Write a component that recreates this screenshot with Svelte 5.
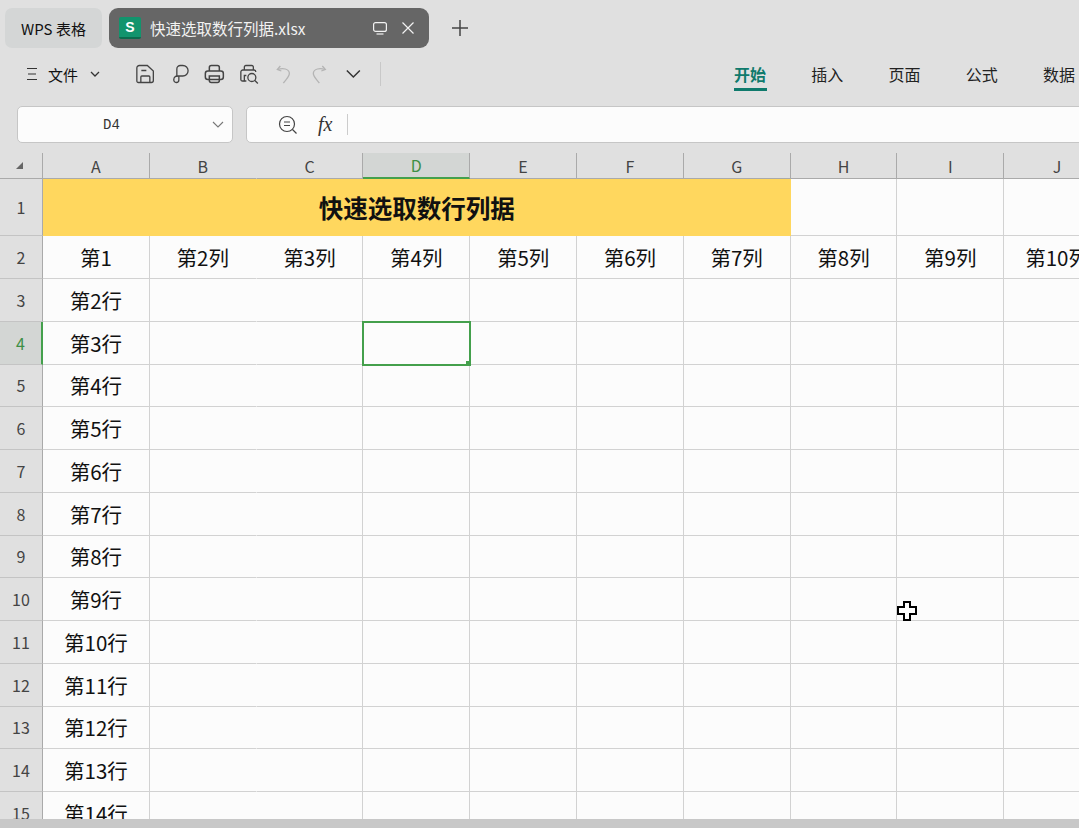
<script>
  const cols = ['A', 'B', 'C', 'D', 'E', 'F', 'G', 'H', 'I', 'J']
  const ribbon = ['开始', '插入', '页面', '公式', '数据']
  const rows = Array.from({ length: 13 }, (_, i) => ({ num: i + 3, label: `第${i + 2}行` }))
  const secondRow = cols.map((_, i) => (i === 0 ? '第1' : `第${i + 1}列`))
</script>

<div class="app">
  <!-- Tabs -->
  <div class="tabs">
    <div class="tab-home">WPS 表格</div>
    <div class="tab-doc">
      <span class="s-logo">S</span>
      <span class="doc-name">快速选取数行列据.xlsx</span>
      <svg class="doc-icon monitor" width="16" height="16" viewBox="0 0 16 16" fill="none" stroke="#f2f2f2" stroke-width="1.2">
        <rect x="1.6" y="2.6" width="12.8" height="8.8" rx="2" />
        <path d="M4.5 14h7" />
      </svg>
      <svg class="doc-icon close" width="14" height="14" viewBox="0 0 14 14" fill="none" stroke="#f2f2f2" stroke-width="1.2">
        <path d="M1.5 1.5l11 11M12.5 1.5l-11 11" />
      </svg>
    </div>
    <svg class="plus" width="18" height="18" viewBox="0 0 18 18" fill="none" stroke="#444" stroke-width="1.5">
      <path d="M9 1v16M1 9h16" />
    </svg>
  </div>

  <!-- Toolbar -->
  <div class="toolbar">
    <div class="file-menu">
      <svg width="12" height="16" viewBox="0 0 12 16" fill="none" stroke="#333" stroke-width="1.2">
        <path d="M1 2.5h10M2 8h8M1 13.5h10" />
      </svg>
      <span class="file-label">文件</span>
      <svg width="10" height="6" viewBox="0 0 10 6" fill="none" stroke="#333" stroke-width="1.3">
        <path d="M1 1l4 4 4-4" />
      </svg>
    </div>
    <div class="quick">
      <svg class="qicon" viewBox="0 0 20 20" fill="none" stroke="#444" stroke-width="1.3">
        <path d="M4 1.5h8l6 5.5v9.5a2 2 0 0 1-2 2H3a1.5 1.5 0 0 1-1.5-1.5V4A2.5 2.5 0 0 1 4 1.5z" />
        <path d="M6 6.5h5M5.5 18.500v-5.500a1 1 0 0 1 1-1h7a1 1 0 0 1 1 1v5.500" />
      </svg>
      <svg class="qicon" viewBox="0 0 20 20" fill="none" stroke="#444" stroke-width="1.3">
        <path d="M6.500 13V5a3.500 3.500 0 0 1 3.500-3.500h2.500a5 5 0 0 1 0 10.500H7a3.500 3.500 0 0 0-3.500 3.500A2.500 2.500 0 0 0 6 18.500a2.500 2.500 0 0 0 2.500-2.500V12" />
      </svg>
      <svg class="qicon" viewBox="0 0 20 20" fill="none" stroke="#444" stroke-width="1.5">
        <path d="M5 7V3.500a2 2 0 0 1 2-2h6a2 2 0 0 1 2 2V7" />
        <rect x="1" y="7" width="18" height="8.500" rx="2.500" />
        <path d="M5 12v4.500a2 2 0 0 0 2 2h6a2 2 0 0 0 2-2V12H5z" />
      </svg>
      <svg class="qicon" viewBox="0 0 20 20" fill="none" stroke="#444" stroke-width="1.300">
        <path d="M5 6V3a1.500 1.500 0 0 1 1.500-1.500h6A1.500 1.500 0 0 1 14 3v3" />
        <path d="M5 17H3a1.500 1.500 0 0 1-1.500-1.500V8A2 2 0 0 1 3.500 6h11A2 2 0 0 1 16.500 8" />
        <path d="M7 11.500H5v5.500h2" />
        <circle cx="12.500" cy="13.500" r="4" />
        <path d="M15.500 16.500l3 3" />
      </svg>
      <svg class="qicon" viewBox="0 0 20 20" fill="none" stroke="#b4b4b4" stroke-width="1.300">
        <path d="M6 2L3 5.500l4 1.500" />
        <path d="M3.500 5.500c5-2 11-.5 11.500 3.500.4 3.500-3 6-6 10" />
      </svg>
      <svg class="qicon" viewBox="0 0 20 20" fill="none" stroke="#b4b4b4" stroke-width="1.300">
        <path d="M14 2l3 3.500-4 1.500" />
        <path d="M16.500 5.500c-5-2-11-.5-11.500 3.500-.4 3.500 3 6 6 10" />
      </svg>
      <svg class="qicon" viewBox="0 0 20 20" fill="none" stroke="#333" stroke-width="1.500">
        <path d="M3.500 6.500L10 13l6.500-6.500" />
      </svg>
    </div>
    <span class="tool-sep"></span>
    <nav class="ribbon">
      {#each ribbon as item, i}
        <span class="ribbon-item" class:active={i === 0}>{item}</span>
      {/each}
    </nav>
  </div>

  <!-- Formula bar -->
  <div class="formula-row">
    <div class="name-box">
      <span class="cell-ref">D4</span>
      <svg class="name-chevron" width="12" height="7" viewBox="0 0 12 7" fill="none" stroke="#777" stroke-width="1.100">
        <path d="M1 1l5 5 5-5" />
      </svg>
    </div>
    <div class="formula-box">
      <svg class="find-icon" width="20" height="20" viewBox="0 0 20 20" fill="none" stroke="#444" stroke-width="1.200">
        <circle cx="9" cy="9" r="7.500" />
        <path d="M6 7h6M6 10.500h6M14.500 14.500l4 4" />
      </svg>
      <span class="fx">fx</span>
      <span class="fx-sep"></span>
    </div>
  </div>

  <!-- Sheet -->
  <div class="sheet">
    <div class="corner"><span class="corner-mark"></span></div>
    {#each cols as col}
      <div class="col-head" class:sel={col === 'D'} class:no-line={col === 'B'}>{col}</div>
    {/each}

    <div class="row-head">1</div>
    <div class="title-cell">快速选取数行列据</div>
    {#each cols.slice(7) as _}
      <div class="cell"></div>
    {/each}

    <div class="row-head">2</div>
    {#each secondRow as text, i}
      <div class="cell" class:no-line={i === 1}>{text}</div>
    {/each}

    {#each rows as row}
      <div class="row-head" class:sel={row.num === 4}>{row.num}</div>
      {#each cols as col, i}
        <div class="cell" class:no-line={col === 'B'} class:current={row.num === 4 && col === 'D'}>
          {i === 0 ? row.label : ''}
        </div>
      {/each}
    {/each}

    <svg class="cursor" width="22" height="22" viewBox="0 0 22 22" shape-rendering="crispEdges">
      <path d="M7 1h8v5h6v9h-6v6H7v-6H1V6h6z" fill="#000" />
      <path d="M9 3h4v5h6v5h-6v6H9v-6H3V8h6z" fill="#fff" transform="translate(0 0)" />
    </svg>
  </div>

  <div class="scroll-strip"></div>
</div>

<style>
  :global(body) {
    margin: 0;
    background: #e0e0e0;
  }

  .app {
    display: flex;
    flex-direction: column;
    width: 1079px;
    height: 828px;
    overflow: hidden;
    background: #e0e0e0;
    color: #111;
    font-family: "Noto Sans CJK SC", "Noto Sans", sans-serif;
  }

  .tabs {
    display: flex;
    align-items: stretch;
    height: 40px;
    padding: 8px 0 8px 5px;
    gap: 7px;
    flex-shrink: 0;
  }

  .tab-home {
    display: flex;
    align-items: center;
    justify-content: center;
    width: 97px;
    border-radius: 7px;
    background: #d4d6d6;
    font-size: 15px;
  }

  .tab-doc {
    display: flex;
    align-items: center;
    width: 320px;
    box-sizing: border-box;
    padding: 0 14px 0 10px;
    border-radius: 9px;
    background: #666;
    color: #f2f2f2;
    font-size: 15.500px;
  }

  .s-logo {
    display: flex;
    align-items: center;
    justify-content: center;
    width: 22px;
    height: 22px;
    border-radius: 2px;
    background: #12946d;
    border-bottom: 2px solid #0c6b4d;
    box-sizing: border-box;
    color: #fff;
    font: 700 14px "Liberation Sans", sans-serif;
  }

  .doc-name {
    margin-left: 9px;
    flex: 1;
    white-space: nowrap;
  }

  .monitor {
    margin-right: 13px;
  }

  .plus {
    align-self: center;
    margin-left: 15px;
  }

  .toolbar {
    display: flex;
    align-items: center;
    height: 36px;
    padding-right: 4px;
    flex-shrink: 0;
  }

  .file-menu {
    display: flex;
    align-items: center;
    width: 128px;
    box-sizing: border-box;
    padding-left: 26px;
  }

  .file-label {
    margin: 0 12px 0 10px;
    font-size: 15px;
  }

  .quick {
    display: flex;
    width: 243px;
  }

  .qicon {
    width: 20px;
    height: 20px;
    flex: 0 0 34.700px;
    box-sizing: border-box;
    padding: 0 7px;
  }

  .tool-sep {
    width: 1px;
    height: 24px;
    margin-left: 9px;
    background: #c8c8c8;
  }

  .ribbon {
    display: flex;
    justify-content: space-between;
    flex: 1;
    margin-left: 353px;
  }

  .ribbon-item {
    position: relative;
    font-size: 16px;
    line-height: 24px;
    color: #222;
  }

  .ribbon-item.active {
    color: #0f7a6c;
    font-weight: 700;
  }

  .ribbon-item.active::after {
    content: "";
    position: absolute;
    left: 0;
    right: -1px;
    bottom: -5px;
    height: 3px;
    background: #0f7a6c;
  }

  .formula-row {
    display: flex;
    gap: 13px;
    height: 37px;
    margin: 14px 0 10px 17px;
    flex-shrink: 0;
  }

  .name-box,
  .formula-box {
    display: flex;
    align-items: center;
    box-sizing: border-box;
    background: #fcfcfc;
    border: 1px solid #c6c6c6;
    border-radius: 5px;
  }

  .name-box {
    justify-content: center;
    position: relative;
    width: 216px;
    flex-shrink: 0;
  }

  .cell-ref {
    margin-right: 27px;
    font: 14px "Liberation Mono", monospace;
    color: #333;
  }

  .name-chevron {
    position: absolute;
    right: 8px;
  }

  .formula-box {
    width: 900px;
    flex-shrink: 0;
    padding-left: 31px;
  }

  .fx {
    margin-left: 20px;
    font: italic 20px "Liberation Serif", serif;
    color: #333;
  }

  .fx-sep {
    width: 1px;
    height: 21px;
    margin-left: 15px;
    background: #ccc;
  }

  .sheet {
    position: relative;
    display: grid;
    grid-template-columns: 43px repeat(10, 106.800px);
    grid-template-rows: 26px 57px 43px;
    grid-auto-rows: 42.750px;
    flex: 1;
    min-height: 0;
    overflow: hidden;
    background: #fcfcfc;
  }

  .corner,
  .col-head,
  .row-head {
    display: flex;
    align-items: center;
    justify-content: center;
    box-sizing: border-box;
    background: #e0e0e0;
    color: #444;
    font-size: 16px;
  }

  .corner {
    position: relative;
    border-right: 1px solid #aaa;
    border-bottom: 1px solid #aaa;
  }

  .corner-mark {
    width: 0;
    height: 0;
    margin-left: -3px;
    border-left: 7px solid transparent;
    border-bottom: 7px solid #666;
  }

  .col-head {
    border-right: 1px solid #aaa;
    border-bottom: 1px solid #aaa;
  }

  .col-head.no-line {
    border-right-color: transparent;
  }

  .col-head.sel {
    background: #d3d6d4;
    color: #3e8f46;
    border-bottom: 2px solid #44a04c;
  }

  .row-head {
    border-right: 1px solid #aaa;
    border-bottom: 1px solid #c4c4c4;
  }

  .row-head.sel {
    background: #d3d6d4;
    color: #3e8f46;
    border-right: 2px solid #44a04c;
  }

  .title-cell {
    grid-column: span 7;
    display: flex;
    align-items: center;
    justify-content: center;
    background: #ffd75e;
    font-size: 24.500px;
    font-weight: 700;
    color: #111;
  }

  .cell {
    display: flex;
    align-items: center;
    justify-content: center;
    box-sizing: border-box;
    border-right: 1px solid #d2d2d2;
    border-bottom: 1px solid #d2d2d2;
    font-size: 20.500px;
    white-space: nowrap;
    overflow: visible;
  }

  .cell.no-line {
    border-right-color: transparent;
  }

  .cell.current {
    position: relative;
    z-index: 1;
    outline: 2px solid #44a04c;
    outline-offset: -1px;
  }

  .cell.current::after {
    content: "";
    position: absolute;
    right: -2px;
    bottom: -2px;
    width: 5px;
    height: 5px;
    background: #44a04c;
  }

  .cursor {
    position: absolute;
    left: 896px;
    top: 447px;
    z-index: 2;
  }

  .scroll-strip {
    height: 9px;
    flex-shrink: 0;
    background: #c8c8c8;
  }
</style>
